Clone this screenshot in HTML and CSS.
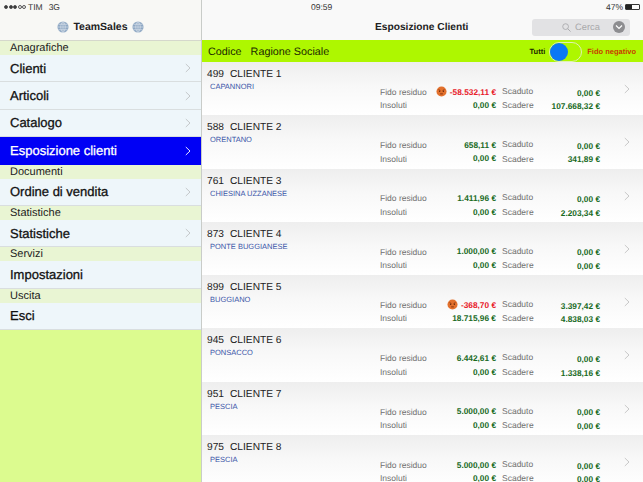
FILE: index.html
```html
<!DOCTYPE html>
<html lang="en">
<head>
    <meta charset="UTF-8">
    <meta name="viewport" content="width=device-width, initial-scale=1.0">
    <title>TeamSales</title>
    <link rel="stylesheet" href="styles.css">
</head>
<body>
    <svg class="defs" width="0" height="0">
        <symbol id="globe" viewBox="0 0 14 14">
            <circle cx="7" cy="7" r="6.5" fill="#8fa8c4"/>
            <path d="M.5 7h13M7 .5v13M1.6 3.8h10.8M1.6 10.2h10.8M7 .5C3.5 4 3.5 10 7 13.500M7 .5c3.500 3.500 3.500 9.500 0 13" fill="none" stroke="#dfe6ee" stroke-width=".7"/>
        </symbol>
        <symbol id="chev" viewBox="0 0 6 10">
            <path d="M.8 1l4.200 4-4.200 4" fill="none" stroke="currentColor" stroke-width="1"/>
        </symbol>
        <symbol id="angry" viewBox="0 0 12 12">
            <circle cx="6" cy="6" r="5.500" fill="#e2702c"/>
            <path d="M2.800 4l2 1M9.200 4l-2 1" stroke="#7a2c0c" stroke-width=".9"/>
            <circle cx="4" cy="5.800" r=".7" fill="#5a2008"/>
            <circle cx="8" cy="5.800" r=".7" fill="#5a2008"/>
            <path d="M4.500 8.600h3" stroke="#7a2c0c" stroke-width=".9"/>
        </symbol>
    </svg>

    <div class="app">
        <aside class="sidebar">
            <div class="side-head">
                <div class="status">
                    <span class="dots"><i class="on"></i><i class="on"></i><i class="on"></i><i></i><i></i></span>
                    <span>TIM</span>
                    <span class="net">3G</span>
                </div>
                <div class="brand">
                    <svg class="globe"><use href="#globe"/></svg>
                    <span>TeamSales</span>
                    <svg class="globe"><use href="#globe"/></svg>
                </div>
            </div>
            <div class="section">Anagrafiche</div>
            <a class="item">Clienti<svg class="chev"><use href="#chev"/></svg></a>
            <a class="item">Articoli<svg class="chev"><use href="#chev"/></svg></a>
            <a class="item">Catalogo<svg class="chev"><use href="#chev"/></svg></a>
            <a class="item active">Esposizione clienti<svg class="chev"><use href="#chev"/></svg></a>
            <div class="section">Documenti</div>
            <a class="item">Ordine di vendita<svg class="chev"><use href="#chev"/></svg></a>
            <div class="section">Statistiche</div>
            <a class="item">Statistiche<svg class="chev"><use href="#chev"/></svg></a>
            <div class="section">Servizi</div>
            <a class="item">Impostazioni</a>
            <div class="section">Uscita</div>
            <a class="item">Esci</a>
        </aside>

        <main class="content">
            <div class="top">
                <div class="status status-right">
                    <span class="clock">09:59</span>
                    <span class="batt-wrap">47%<span class="battery"><span class="battery-level"></span></span></span>
                </div>
                <div class="titlebar">
                    <h1>Esposizione Clienti</h1>
                    <div class="search">
                        <svg class="lens" viewBox="0 0 10 10"><circle cx="4" cy="4" r="3.200" fill="none" stroke="#a5a5a8" stroke-width=".9"/><path d="M6.400 6.400L9.500 9.500" stroke="#a5a5a8"/></svg>
                        <span class="search-text">Cerca</span>
                        <span class="search-btn"><svg viewBox="0 0 8 6"><path d="M1 1.500l3 3 3-3" fill="none" stroke="#fff" stroke-width="1.200"/></svg></span>
                    </div>
                </div>
            </div>

            <div class="filter">
                <span>Codice</span>
                <span>Ragione Sociale</span>
                <span class="filter-right">
                    <b class="all">Tutti</b>
                    <span class="switch"><span class="knob"></span></span>
                    <b class="neg">Fido negativo</b>
                </span>
            </div>

            <div class="list">
                <div class="row">
                    <div class="who"><div class="name"><span>499</span>CLIENTE 1</div><div class="city">CAPANNORI</div></div>
                    <div class="nums">
                        <span class="lbl">Fido residuo</span><span class="val red"><svg class="angry"><use href="#angry"/></svg>-58.532,11 €</span><span class="lbl lbl2">Scaduto</span><span class="val val2">0,00 €</span>
                        <span class="lbl">Insoluti</span><span class="val">0,00 €</span><span class="lbl lbl2">Scadere</span><span class="val val2">107.668,32 €</span>
                    </div>
                    <svg class="chev"><use href="#chev"/></svg>
                </div>
                <div class="row">
                    <div class="who"><div class="name"><span>588</span>CLIENTE 2</div><div class="city">ORENTANO</div></div>
                    <div class="nums">
                        <span class="lbl">Fido residuo</span><span class="val">658,11 €</span><span class="lbl lbl2">Scaduto</span><span class="val val2">0,00 €</span>
                        <span class="lbl">Insoluti</span><span class="val">0,00 €</span><span class="lbl lbl2">Scadere</span><span class="val val2">341,89 €</span>
                    </div>
                    <svg class="chev"><use href="#chev"/></svg>
                </div>
                <div class="row">
                    <div class="who"><div class="name"><span>761</span>CLIENTE 3</div><div class="city">CHIESINA UZZANESE</div></div>
                    <div class="nums">
                        <span class="lbl">Fido residuo</span><span class="val">1.411,96 €</span><span class="lbl lbl2">Scaduto</span><span class="val val2">0,00 €</span>
                        <span class="lbl">Insoluti</span><span class="val">0,00 €</span><span class="lbl lbl2">Scadere</span><span class="val val2">2.203,34 €</span>
                    </div>
                    <svg class="chev"><use href="#chev"/></svg>
                </div>
                <div class="row">
                    <div class="who"><div class="name"><span>873</span>CLIENTE 4</div><div class="city">PONTE BUGGIANESE</div></div>
                    <div class="nums">
                        <span class="lbl">Fido residuo</span><span class="val">1.000,00 €</span><span class="lbl lbl2">Scaduto</span><span class="val val2">0,00 €</span>
                        <span class="lbl">Insoluti</span><span class="val">0,00 €</span><span class="lbl lbl2">Scadere</span><span class="val val2">0,00 €</span>
                    </div>
                    <svg class="chev"><use href="#chev"/></svg>
                </div>
                <div class="row">
                    <div class="who"><div class="name"><span>899</span>CLIENTE 5</div><div class="city">BUGGIANO</div></div>
                    <div class="nums">
                        <span class="lbl">Fido residuo</span><span class="val red"><svg class="angry"><use href="#angry"/></svg>-368,70 €</span><span class="lbl lbl2">Scaduto</span><span class="val val2">3.397,42 €</span>
                        <span class="lbl">Insoluti</span><span class="val">18.715,96 €</span><span class="lbl lbl2">Scadere</span><span class="val val2">4.838,03 €</span>
                    </div>
                    <svg class="chev"><use href="#chev"/></svg>
                </div>
                <div class="row">
                    <div class="who"><div class="name"><span>945</span>CLIENTE 6</div><div class="city">PONSACCO</div></div>
                    <div class="nums">
                        <span class="lbl">Fido residuo</span><span class="val">6.442,61 €</span><span class="lbl lbl2">Scaduto</span><span class="val val2">0,00 €</span>
                        <span class="lbl">Insoluti</span><span class="val">0,00 €</span><span class="lbl lbl2">Scadere</span><span class="val val2">1.338,16 €</span>
                    </div>
                    <svg class="chev"><use href="#chev"/></svg>
                </div>
                <div class="row">
                    <div class="who"><div class="name"><span>951</span>CLIENTE 7</div><div class="city">PESCIA</div></div>
                    <div class="nums">
                        <span class="lbl">Fido residuo</span><span class="val">5.000,00 €</span><span class="lbl lbl2">Scaduto</span><span class="val val2">0,00 €</span>
                        <span class="lbl">Insoluti</span><span class="val">0,00 €</span><span class="lbl lbl2">Scadere</span><span class="val val2">0,00 €</span>
                    </div>
                    <svg class="chev"><use href="#chev"/></svg>
                </div>
                <div class="row">
                    <div class="who"><div class="name"><span>975</span>CLIENTE 8</div><div class="city">PESCIA</div></div>
                    <div class="nums">
                        <span class="lbl">Fido residuo</span><span class="val">5.000,00 €</span><span class="lbl lbl2">Scaduto</span><span class="val val2">0,00 €</span>
                        <span class="lbl">Insoluti</span><span class="val">0,00 €</span><span class="lbl lbl2">Scadere</span><span class="val val2">0,00 €</span>
                    </div>
                    <svg class="chev"><use href="#chev"/></svg>
                </div>
            </div>
        </main>
    </div>
</body>
</html>
```

FILE: styles.css
```css
* {
    margin: 0;
    padding: 0;
    box-sizing: border-box;
}
html, body {
    height: 100%;
    overflow: hidden;
}
body {
    font-family: 'Liberation Sans', Arial, sans-serif;
    background-color: #fff;
    color: #111;
    text-rendering: geometricPrecision;
}
.defs {
    display: block;
}
.app {
    display: flex;
    height: 482px;
}

/* left menu */
.sidebar {
    width: 202px;
    flex-shrink: 0;
    background-color: #dcfb8f;
    border-right: 1px solid #c9ccc9;
}
.side-head {
    height: 41px;
    background-color: #f8f8f5;
    border-bottom: 1px solid #d5d8cc;
}
.status {
    display: flex;
    align-items: center;
    height: 14px;
    font-size: 8.5px;
    padding-left: 4px;
    color: #333;
}
.dots {
    display: flex;
    gap: 0.5px;
    margin-right: 2px;
}
.dots i {
    display: block;
    width: 4px;
    height: 4px;
    border: 0.5px solid #555;
    border-radius: 50%;
}
.dots .on {
    background-color: #333;
}
.net {
    margin-left: 6px;
}
.brand {
    display: flex;
    justify-content: center;
    align-items: center;
    gap: 4px;
    height: 25px;
    font-size: 10.500px;
    font-weight: bold;
    color: #222;
}
.globe {
    width: 12px;
    height: 12px;
}
.section {
    height: 14px;
    padding-left: 10px;
    font-size: 11px;
    line-height: 14px;
    color: #222;
    background-color: #e9f5d3;
}
.item {
    display: flex;
    justify-content: space-between;
    align-items: center;
    height: 27.400px;
    padding: 0 10px;
    font-size: 13px;
    -webkit-text-stroke: 0.3px #111;
    color: #111;
    background-color: #eef6fa;
    border-bottom: 1px solid #d9dedf;
}
.item .chev {
    color: #c4c8ca;
}
.item.active {
    background-color: #0000f5;
    color: #fff;
    -webkit-text-stroke: 0.3px #fff;
    border-bottom: none;
}
.item.active .chev {
    color: #e4e4ff;
}
.chev {
    width: 6px;
    height: 10px;
    flex-shrink: 0;
}

/* right side */
.content {
    flex: 1;
    min-width: 0;
}
.top {
    height: 40px;
    background-color: #f9f9f9;
    position: relative;
}
.status-right {
    padding-left: 109px;
}
.batt-wrap {
    position: absolute;
    right: 3px;
    top: 0;
    height: 14px;
    display: flex;
    align-items: center;
    gap: 2px;
}
.battery {
    width: 15px;
    height: 6px;
    border: 1px solid #333;
    border-radius: 1px;
    display: block;
}
.battery-level {
    display: block;
    width: 46%;
    height: 100%;
    background-color: #222;
}
.titlebar {
    display: flex;
    align-items: center;
    height: 26px;
    padding-left: 173px;
}
h1 {
    font-size: 10.200px;
    font-weight: bold;
    color: #222;
}
.search {
    display: flex;
    align-items: center;
    width: 98px;
    height: 17px;
    margin-left: auto;
    margin-right: 13px;
    padding: 0 5px 0 30px;
    background-color: #e2e2e4;
    border-radius: 3px;
}
.lens {
    width: 9px;
    height: 9px;
}
.search-text {
    margin-left: 4px;
    font-size: 9.300px;
    color: #a8a8aa;
}
.search-btn {
    display: flex;
    justify-content: center;
    align-items: center;
    width: 12px;
    height: 12px;
    margin-left: auto;
    border-radius: 50%;
    background-color: #8d8d90;
}
.search-btn svg {
    width: 8px;
    height: 6px;
}
.filter {
    display: flex;
    align-items: center;
    gap: 9px;
    height: 22px;
    padding: 1px 0 0 6px;
    font-size: 10.800px;
    color: #1c2a00;
    background-color: #aef700;
}
.filter-right {
    display: flex;
    align-items: center;
    margin-left: auto;
    margin-right: 7px;
}
.all {
    font-size: 7.500px;
    color: #1c2a00;
}
.switch {
    display: block;
    width: 33px;
    height: 20px;
    margin: 0 5px 0 4px;
    border: 1px solid #dff2b0;
    border-radius: 10px;
}
.knob {
    display: block;
    width: 18px;
    height: 18px;
    border-radius: 50%;
    background-color: #0a78f5;
}
.neg {
    font-size: 7.500px;
    color: #c83c00;
}
.row {
    display: flex;
    height: 53.300px;
    padding-left: 5px;
    background: linear-gradient(#eeeeee, #f8f8f8 45%, #ffffff);
}
.who {
    width: 173px;
    flex-shrink: 0;
    padding-top: 6px;
}
.name {
    font-size: 10.200px;
    line-height: 13px;
    color: #222;
}
.name span {
    margin-right: 6px;
}
.city {
    margin-top: 1px;
    padding-left: 3px;
    font-size: 7.500px;
    line-height: 9px;
    color: #3a55a8;
}
.nums {
    display: grid;
    grid-template-columns: 116px 6px 44px 54px;
    grid-template-rows: 13.500px 13.500px;
    align-content: end;
    padding-bottom: 3.500px;
    font-size: 8.500px;
}
.lbl {
    grid-column: 1;
    margin-top: 1px;
    color: #707070;
    white-space: nowrap;
    line-height: 13px;
}
.val {
    grid-column: 1;
    justify-self: end;
    display: flex;
    align-items: center;
    font-size: 8.300px;
    font-weight: bold;
    color: #186a1e;
    line-height: 14px;
    white-space: nowrap;
}
.red {
    color: #e8202a;
}
.lbl2 {
    grid-column: 3;
    margin-top: 0;
}
.val2 {
    grid-column: 3 / 5;
    padding-top: 2px;
}
.nums > .lbl, .nums > .val {
    grid-row: 1;
}
.nums > :nth-child(n+5) {
    grid-row: 2;
}
.nums > .lbl2:nth-child(n+5) {
    margin-top: 1px;
}
.angry {
    width: 11px;
    height: 11px;
    margin-right: 3px;
}
.row > .chev {
    color: #c8c8c8;
    margin: 22px 0 0 24px;
}
```
